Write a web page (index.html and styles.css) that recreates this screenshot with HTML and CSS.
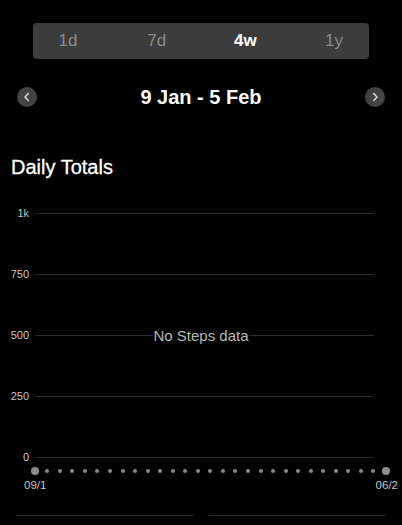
FILE: index.html
```html
<!DOCTYPE html>
<html lang="en">
<head>
<meta charset="utf-8">
<title>Steps</title>
<link rel="stylesheet" href="styles.css">
</head>
<body>
<div class="segmented">
  <div class="seg">1d</div>
  <div class="seg">7d</div>
  <div class="seg active">4w</div>
  <div class="seg">1y</div>
</div>
<div class="date-row">
  <div class="nav-btn">
    <svg width="20" height="20" viewBox="0 0 20 20"><polyline points="11.3,6.6 8,10 11.3,13.4" fill="none" stroke="#e0e0e0" stroke-width="1.4" stroke-linecap="round" stroke-linejoin="round"/></svg>
  </div>
  <div class="date-title">9 Jan - 5 Feb</div>
  <div class="nav-btn">
    <svg width="20" height="20" viewBox="0 0 20 20"><polyline points="8.7,6.6 12,10 8.7,13.4" fill="none" stroke="#e0e0e0" stroke-width="1.4" stroke-linecap="round" stroke-linejoin="round"/></svg>
  </div>
</div>
<h2 class="section-title">Daily Totals</h2>
<div class="chart">
  <div class="grid">
    <div class="grid-row"><span class="axis">1k</span><span class="line"></span></div>
    <div class="grid-row"><span class="axis">750</span><span class="line"></span></div>
    <div class="grid-row"><span class="axis">500</span><span class="line"></span></div>
    <div class="grid-row"><span class="axis">250</span><span class="line"></span></div>
    <div class="grid-row"><span class="axis">0</span><span class="line"></span></div>
    <div class="empty">No Steps data</div>
  </div>
  <div class="dots">
    <span class="dot big"></span>
    <span class="dot"></span><span class="dot"></span><span class="dot"></span><span class="dot"></span><span class="dot"></span><span class="dot"></span><span class="dot"></span><span class="dot"></span><span class="dot"></span>
    <span class="dot"></span><span class="dot"></span><span class="dot"></span><span class="dot"></span><span class="dot"></span><span class="dot"></span><span class="dot"></span><span class="dot"></span><span class="dot"></span>
    <span class="dot"></span><span class="dot"></span><span class="dot"></span><span class="dot"></span><span class="dot"></span><span class="dot"></span><span class="dot"></span><span class="dot"></span><span class="dot"></span>
    <span class="dot big"></span>
  </div>
  <div class="x-labels">
    <span>09/1</span>
    <span>06/2</span>
  </div>
</div>
<div class="bottom-tabs">
  <span class="tab-line"></span>
  <span class="tab-line"></span>
</div>
</body>
</html>
```
FILE: styles.css
```css
html, body {
  margin: 0;
  padding: 0;
  background: #000;
  color: #fff;
  font-family: "Liberation Sans", Arial, sans-serif;
}

.segmented {
  margin: 23px 33px 0;
  height: 36px;
  background: #3c3c3c;
  border-radius: 4px;
  display: flex;
  align-items: center;
  justify-content: space-between;
  padding: 0 5px;
}

.seg {
  width: 60px;
  text-align: center;
  font-size: 17px;
  color: #8c8c8c;
}

.seg.active {
  color: #fff;
  font-weight: bold;
}

.date-row {
  margin-top: 28px;
  padding: 0 17px;
  display: flex;
  align-items: center;
  justify-content: space-between;
  height: 20px;
}

.nav-btn {
  width: 20px;
  height: 20px;
  border-radius: 50%;
  background: #434343;
  display: flex;
}

.date-title {
  font-size: 20px;
  font-weight: bold;
  color: #fff;
}

.section-title {
  margin: 49px 0 0 11px;
  font-size: 20px;
  font-weight: normal;
  line-height: 23px;
  color: #fff;
  -webkit-text-stroke: 0.3px #fff;
}

.chart {
  margin-top: 26px;
}

.grid {
  position: relative;
  display: flex;
  flex-direction: column;
  gap: 45px;
}

.grid-row {
  height: 16px;
  display: flex;
  align-items: center;
}

.axis {
  width: 29px;
  text-align: right;
  font-size: 11px;
  color: #c4c4c4;
}

.line {
  flex: 1;
  height: 1px;
  background: #2c2c2c;
  margin: 0 28px 0 6px;
}

.empty {
  position: absolute;
  left: 0;
  right: 0;
  top: 122px;
  margin: 0 auto;
  width: max-content;
  background: #000;
  font-size: 15px;
  line-height: 18px;
  color: #b8b8b8;
}

.dots {
  margin: 2px 11.7px 0 30.7px;
  height: 8px;
  display: flex;
  justify-content: space-between;
  align-items: center;
}

.dot {
  width: 8px;
  height: 8px;
  display: flex;
  align-items: center;
  justify-content: center;
}

.dot::before {
  content: "";
  width: 4px;
  height: 4px;
  border-radius: 50%;
  background: #8a8a8a;
}

.dot.big::before {
  width: 8px;
  height: 8px;
  background: #8e8e8e;
}

.x-labels {
  margin-top: 3px;
  padding: 0 4px 0 24px;
  display: flex;
  justify-content: space-between;
  font-size: 11.5px;
  line-height: 14px;
  color: #c4c4c4;
}

.bottom-tabs {
  margin-top: 23px;
  padding: 0 16px;
  display: flex;
  gap: 15px;
}

.tab-line {
  flex: 1;
  height: 1px;
  background: #2e2e2e;
}
```
